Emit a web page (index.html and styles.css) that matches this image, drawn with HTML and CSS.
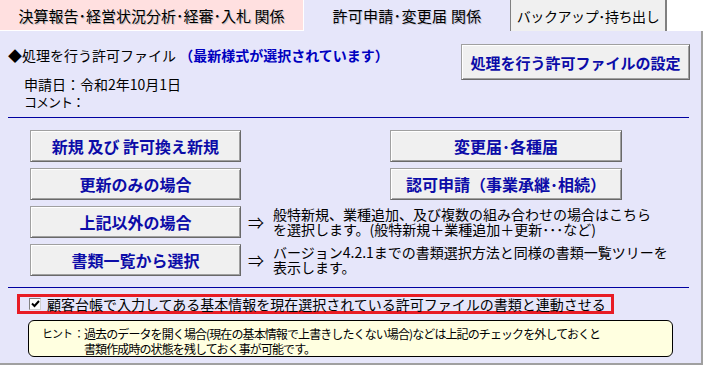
FILE: index.html
```html
<!DOCTYPE html>
<html lang="ja">
<head>
  <meta charset="UTF-8" />
  <meta name="viewport" content="width=device-width, initial-scale=1.0"/>
  <title>許可申請・変更届 関係</title>
  <link rel="stylesheet" href="styles.css">
</head>
<body>
  <div class="window">
    <!-- Tabs -->
    <div class="tabs">
      <div class="tab tab-pink">決算報告･経営状況分析･経審･入札 関係</div>
      <div class="tab tab-active">許可申請･変更届 関係</div>
      <div class="tab tab-grey">バックアップ･持ち出し</div>
    </div>

    <div class="panel">
      <!-- Current file -->
      <section class="file-section">
        <div class="file-info">
          <p class="file-title">◆処理を行う許可ファイル <span class="latest">（最新様式が選択されています）</span></p>
          <p class="meta meta-date">申請日：令和2年10月1日</p>
          <p class="meta meta-comment">コメント：</p>
        </div>
        <button class="btn btn-setting">処理を行う許可ファイルの設定</button>
      </section>

      <!-- Actions -->
      <section class="actions">
        <div class="action-row">
          <button class="btn btn-main">新規 及び 許可換え新規</button>
          <button class="btn btn-side">変更届･各種届</button>
        </div>
        <div class="action-row">
          <button class="btn btn-main">更新のみの場合</button>
          <button class="btn btn-side">認可申請（事業承継･相続）</button>
        </div>
        <div class="action-row">
          <button class="btn btn-main">上記以外の場合</button>
          <div class="note">
            <span class="arrow">⇒</span>
            <p>般特新規、業種追加、及び複数の組み合わせの場合はこちら<br>を選択します。(般特新規＋業種追加＋更新･･･など)</p>
          </div>
        </div>
        <div class="action-row">
          <button class="btn btn-main">書類一覧から選択</button>
          <div class="note">
            <span class="arrow">⇒</span>
            <p>バージョン4.2.1までの書類選択方法と同様の書類一覧ツリーを<br>表示します。</p>
          </div>
        </div>
      </section>

      <!-- Link option -->
      <label class="link-check">
        <span class="check-box">
          <svg width="9" height="8" viewBox="0 0 9 8"><path d="M1 3.5 L3.5 6 L8 1" fill="none" stroke="#000" stroke-width="2"/></svg>
        </span>
        顧客台帳で入力してある基本情報を現在選択されている許可ファイルの書類と連動させる
      </label>

      <div class="hint">
        <span class="hint-label">ヒント ：</span>
        <p>過去のデータを開く場合(現在の基本情報で上書きしたくない場合)などは上記のチェックを外しておくと<br>書類作成時の状態を残しておく事が可能です。</p>
      </div>
    </div>
  </div>
</body>
</html>
```

FILE: styles.css
```css
/* Page */
body {
  margin: 0;
  background: #fff;
  font-family: "Noto Sans CJK JP", "Noto Sans", sans-serif;
  color: #000;
}

p {
  margin: 0;
}

.window {
  width: 703px;
}

/* Tabs */
.tabs {
  display: flex;
  height: 31px;
}

.tab {
  box-sizing: border-box;
  height: 31px;
  display: flex;
  align-items: center;
  justify-content: center;
  font-size: 15px;
  white-space: nowrap;
}

.tab-pink {
  width: 304px;
  background: #ffe0e0;
  border-right: 1px solid #fff;
  border-bottom: 1px solid #fff;
  text-shadow: 1px 1px 0 #c8c0c0;
}

.tab-active {
  width: 206px;
  background: #e6e6fa;
  letter-spacing: 0.3px;
  text-shadow: 1px 1px 0 #c0c0d0;
}

.tab-grey {
  width: 157px;
  background: #f0f0f0;
  border-left: 1px solid #808080;
  border-right: 2px solid #808080;
  font-size: 14px;
  letter-spacing: -0.4px;
}

/* Panel */
.panel {
  box-sizing: border-box;
  height: 334px;
  padding: 0 12px 0 8px;
  background: #e6e6fa;
  border-right: 2px solid #a0a0a0;
  border-bottom: 2px solid #a0a0a0;
}

/* Buttons */
.btn {
  box-sizing: border-box;
  height: 32px;
  padding: 0;
  background: #f0f0f0;
  border: 1px solid #a0a0a0;
  border-right-color: #696969;
  border-bottom-color: #696969;
  box-shadow: inset 1px 1px 0 #fff, inset -1px -1px 0 #a0a0a0;
  font-family: inherit;
  font-size: 16px;
  font-weight: bold;
  color: #0c0ca8;
  white-space: nowrap;
  cursor: pointer;
}

/* Current file section */
.file-section {
  display: flex;
  justify-content: space-between;
  align-items: flex-start;
  padding: 15px 0 7px;
  border-bottom: 1px solid #0000a0;
}

.file-title {
  font-size: 14px;
  line-height: 18px;
}

.latest {
  color: #0000c0;
  font-weight: bold;
}

.meta {
  padding-left: 16px;
  font-size: 14px;
  line-height: 17px;
}

.meta-date {
  margin-top: 12px;
}

.meta-comment {
  font-size: 13px;
  letter-spacing: -1px;
}

.btn-setting {
  width: 229px;
  height: 36px;
  margin-top: -2px;
  margin-right: -1px;
  font-size: 15px;
}

/* Action rows */
.actions {
  display: flex;
  flex-direction: column;
  gap: 6px;
  padding: 12px 0 11px 22px;
  border-bottom: 1px solid #0000a0;
}

.action-row {
  display: flex;
  align-items: center;
  height: 32px;
}

.btn-main {
  width: 211px;
}

.btn-side {
  width: 232px;
  margin-left: 149px;
}

.note {
  display: flex;
  align-items: center;
  margin-left: 7px;
  font-size: 14px;
  line-height: 15px;
}

.arrow {
  width: 25px;
  font-size: 16px;
}

/* Link checkbox */
.link-check {
  display: inline-flex;
  align-items: center;
  gap: 6px;
  height: 20px;
  box-sizing: border-box;
  margin: 6px 0 0 9px;
  padding: 0 5px 0 9px;
  border: 3px solid #e81c24;
  font-size: 14px;
  line-height: 14px;
  white-space: nowrap;
}

.check-box {
  box-sizing: border-box;
  width: 12px;
  height: 12px;
  display: flex;
  align-items: center;
  justify-content: center;
  background: #fff;
  border: 1px solid #808080;
  border-right-color: #d0d0d0;
  border-bottom-color: #d0d0d0;
}

/* Hint */
.hint {
  box-sizing: border-box;
  display: flex;
  width: 645px;
  height: 37px;
  margin: 6px 0 0 20px;
  padding: 5px 0 0 13px;
  background: #ffffe0;
  border: 1px solid #000;
  border-radius: 6px;
  font-size: 12px;
  line-height: 15px;
  letter-spacing: -0.9px;
  white-space: nowrap;
}

.hint-label {
  flex: none;
  width: 42px;
  font-size: 11px;
  letter-spacing: -1px;
}
```
